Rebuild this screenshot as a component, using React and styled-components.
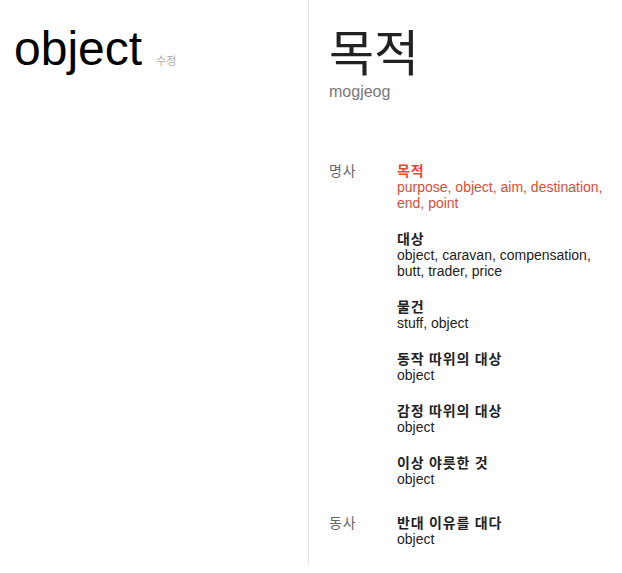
import React from "react";
import styled, { createGlobalStyle } from "styled-components";

const Global = createGlobalStyle`
  html, body { margin: 0; padding: 0; background: #fff; }
  body { font-family: "Liberation Sans", Arial, "Noto Sans CJK KR", sans-serif; }
`;

const Page = styled.div`
  display: flex;
  flex-direction: row;
  width: 622px;
  height: 573px;
`;

const SourcePane = styled.div`
  width: 309px;
  height: 565px;
  border-right: 1px solid #e5e5e5;
  padding: 21px 0 0 14px;
  box-sizing: border-box;
  display: flex;
  flex-direction: row;
  align-items: baseline;
`;

const SourceWord = styled.div`
  font-size: 48px;
  line-height: 56px;
  color: #000;
`;

const EditLink = styled.span`
  font-size: 11px;
  color: #aaa;
  margin-left: 14px;
  margin-bottom: -2px;
`;

const TargetPane = styled.div`
  flex: 1;
  padding: 26px 0 0 20px;
  display: flex;
  flex-direction: column;
`;

const TargetWord = styled.div`
  font-size: 49px;
  line-height: 56px;
  color: #222;
`;

const Romanized = styled.div`
  font-size: 16px;
  line-height: 20px;
  color: #777;
`;

const Dictionary = styled.div`
  margin-top: 61px;
  display: flex;
  flex-direction: column;
  gap: 8px;
`;

const PosGroup = styled.div`
  display: grid;
  grid-template-columns: 68px 1fr;
`;

const PosLabel = styled.div`
  font-size: 14px;
  letter-spacing: 0.8px;
  line-height: 16px;
  color: #666;
`;

const Entries = styled.div`
  display: flex;
  flex-direction: column;
`;

const Entry = styled.div`
  margin-bottom: 20px;
  color: ${(p) => (p.$top ? "#dd4b39" : "#222")};
`;

const Term = styled.div`
  font-size: 14px;
  letter-spacing: 0.8px;
  font-weight: bold;
  line-height: 16px;
`;

const Meanings = styled.div`
  font-size: 14px;
  line-height: 16px;
  width: 210px;
`;

const groups = [
  {
    pos: "명사",
    entries: [
      { term: "목적", meanings: "purpose, object, aim, destination, end, point", top: true },
      { term: "대상", meanings: "object, caravan, compensation, butt, trader, price" },
      { term: "물건", meanings: "stuff, object" },
      { term: "동작 따위의 대상", meanings: "object" },
      { term: "감정 따위의 대상", meanings: "object" },
      { term: "이상 야릇한 것", meanings: "object" },
    ],
  },
  {
    pos: "동사",
    entries: [{ term: "반대 이유를 대다", meanings: "object" }],
  },
];

export default function App() {
  return (
    <>
      <Global />
      <Page>
        <SourcePane>
          <SourceWord>object</SourceWord>
          <EditLink>수정</EditLink>
        </SourcePane>
        <TargetPane>
          <TargetWord>목적</TargetWord>
          <Romanized>mogjeog</Romanized>
          <Dictionary>
            {groups.map((g) => (
              <PosGroup key={g.pos}>
                <PosLabel>{g.pos}</PosLabel>
                <Entries>
                  {g.entries.map((e) => (
                    <Entry key={e.term} $top={e.top}>
                      <Term>{e.term}</Term>
                      <Meanings>{e.meanings}</Meanings>
                    </Entry>
                  ))}
                </Entries>
              </PosGroup>
            ))}
          </Dictionary>
        </TargetPane>
      </Page>
    </>
  );
}
